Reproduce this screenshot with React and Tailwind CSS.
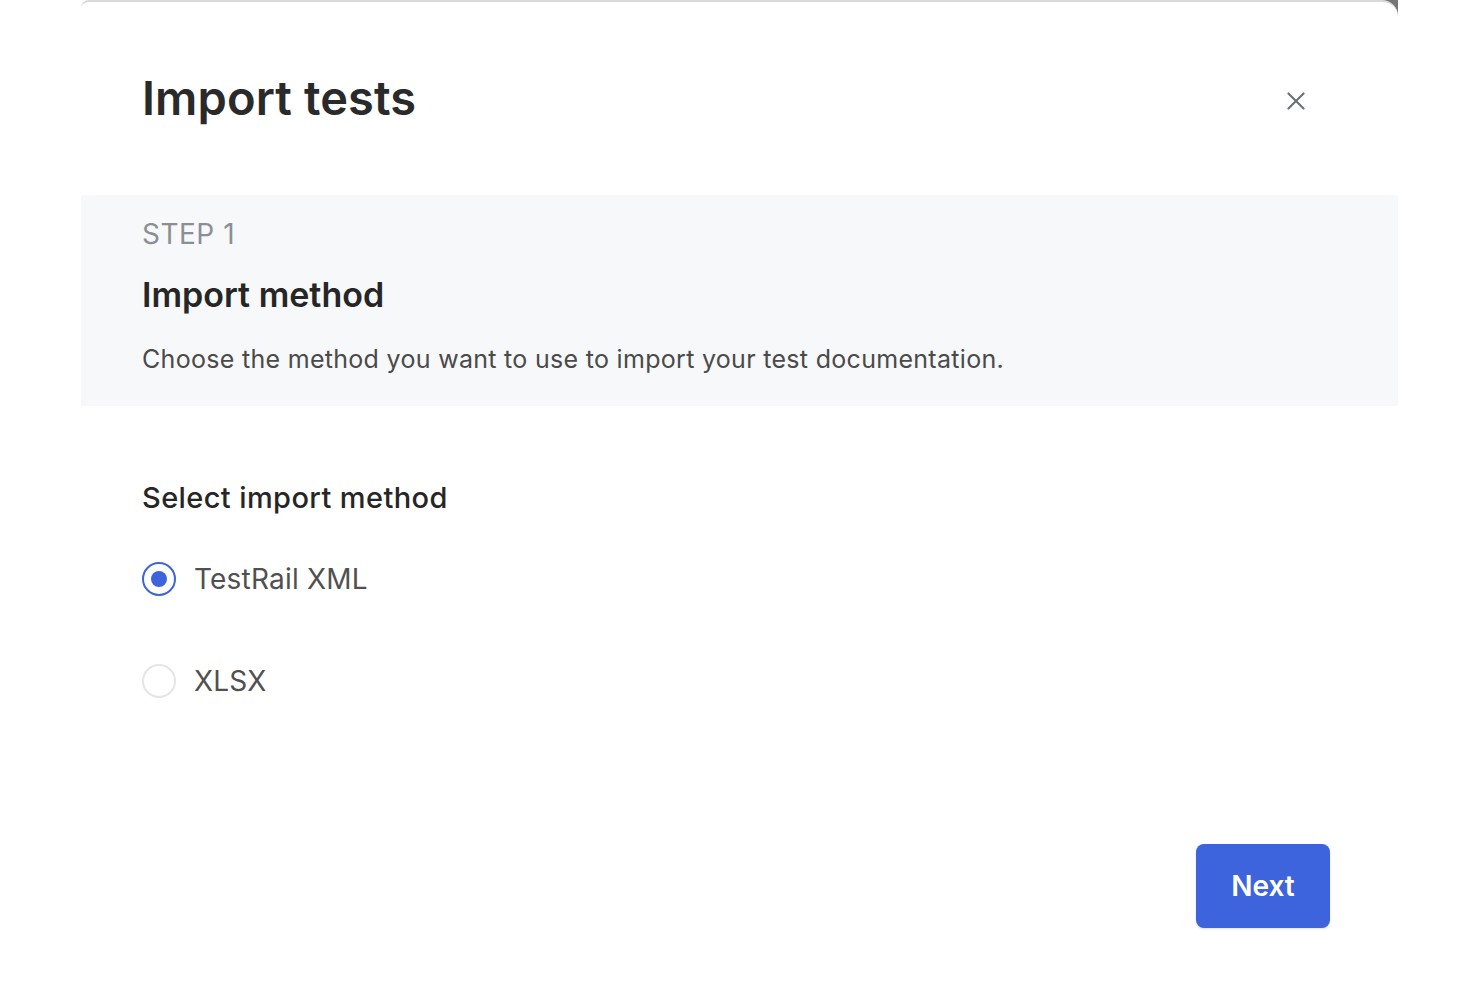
import React, { useState } from 'react';

export default function App() {
  const options = ['TestRail XML', 'XLSX'];
  const [method, setMethod] = useState('TestRail XML');

  return (
    <div className="min-h-[987px] w-[1480px] bg-white" style={{ fontFamily: 'Inter, "Noto Sans", sans-serif' }}>
      <div className="relative ml-[81px] w-[1317px]">
        <div className="absolute right-0 top-0 h-4 w-4 bg-[#777]"></div>
        <div className="relative flex h-[987px] flex-col rounded-tr-2xl rounded-tl-lg border-t-2 border-[#d9d9d9] bg-white">
          <div className="flex items-center justify-between pl-[61px] pr-[89px] pt-[69px] pb-[70px]">
            <h1 className="text-[47px] font-semibold leading-[54px] tracking-[0.1px] text-[#2a2a2a]">Import tests</h1>
            <button type="button" className="mt-[6px] text-[#6b7075]">
              <svg width="26" height="26" viewBox="0 0 24 24" fill="none" stroke="currentColor" strokeWidth="1.9" strokeLinecap="round">
                <path d="M5 5l14 14M19 5L5 19" />
              </svg>
            </button>
          </div>

          <div className="bg-[#f7f8fa] px-[61px] pt-[21px] pb-[31px]">
            <p className="text-[28px] leading-[36px] tracking-[0.5px] text-[#8a8f96]">STEP 1</p>
            <h2 className="mt-[23px] text-[34px] font-semibold leading-[40px] text-[#262626]">Import method</h2>
            <p className="mt-[28px] text-[25px] leading-[32px] tracking-[0.3px] text-[#4a4a4a]">
              Choose the method you want to use to import your test documentation.
            </p>
          </div>

          <div className="px-[61px] pt-[74px]">
            <h3 className="text-[29px] font-medium leading-[36px] tracking-[0.4px] text-[#262626]">Select import method</h3>
            <div className="mt-[46px] flex flex-col gap-[68px]">
              {options.map((opt) => (
                <label key={opt} className="flex cursor-pointer items-center gap-[18px]" onClick={() => setMethod(opt)}>
                  {method === opt ? (
                    <span className="flex h-[34px] w-[34px] items-center justify-center rounded-full border-2 border-[#3d63dd] bg-white">
                      <span className="h-[16px] w-[16px] rounded-full bg-[#3d63dd]"></span>
                    </span>
                  ) : (
                    <span className="h-[34px] w-[34px] rounded-full border-2 border-[#e3e5e8] bg-white"></span>
                  )}
                  <span className="text-[28px] leading-[34px] tracking-[0.2px] text-[#505050]">{opt}</span>
                </label>
              ))}
            </div>
          </div>

          <div className="mt-auto flex justify-end pr-[68px] pb-[59px]">
            <button type="button" className="h-[84px] w-[134px] rounded-lg bg-[#3d63dd] text-[28px] font-semibold text-white shadow-sm">
              Next
            </button>
          </div>
        </div>
      </div>
    </div>
  );
}
